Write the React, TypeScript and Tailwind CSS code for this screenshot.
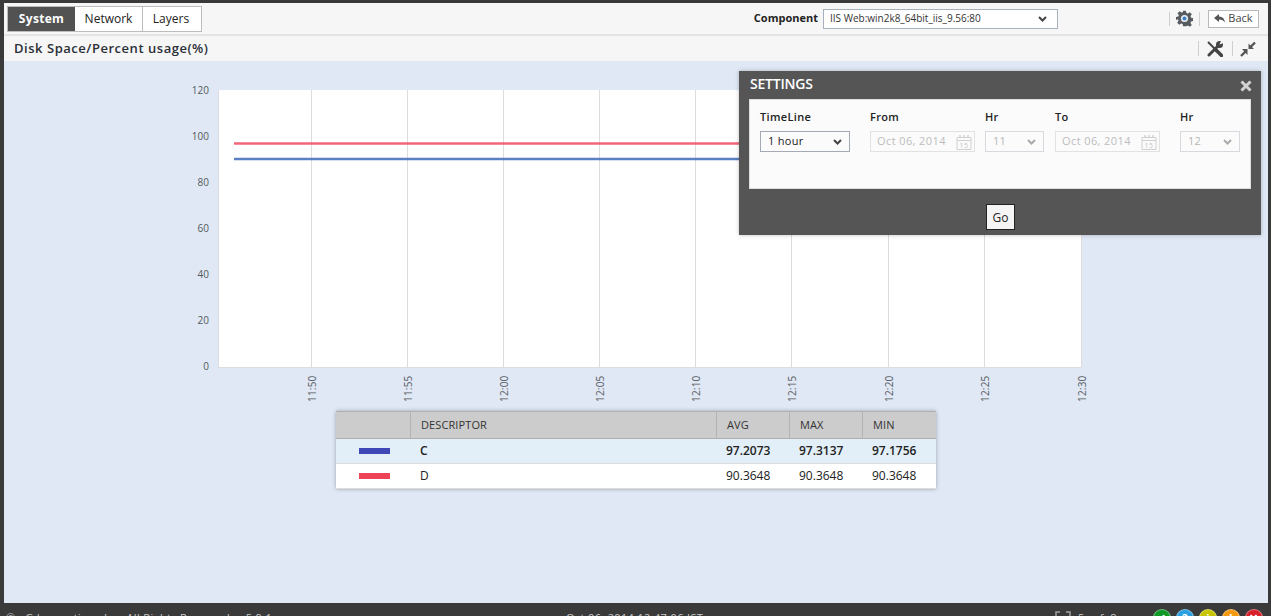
import React from "react";

const Chevron = ({ c = "#444" }: { c?: string }) => (
  <svg width="9" height="6" viewBox="0 0 9 6" className="shrink-0">
    <path d="M1 1 L4.500 4.500 L8 1" fill="none" stroke={c} strokeWidth="2" />
  </svg>
);

const Cal = () => (
  <svg width="16" height="16" viewBox="0 0 16 16" className="shrink-0">
    <path d="M1 3.5h14v12H1z M1 6.5h14" fill="none" stroke="#d0d0d0" strokeWidth="1" />
    <path d="M4 1v3M8 1v3M12 1v3" stroke="#d0d0d0" strokeWidth="1.4" />
    <text x="8" y="14" textAnchor="middle" fontSize="7" fill="#c4c4c4" fontFamily="Open Sans">15</text>
  </svg>
);

const xs = [311, 407, 503, 599, 695, 791, 888, 984, 1081];
const xl = ["11:50", "11:55", "12:00", "12:05", "12:10", "12:15", "12:20", "12:25", "12:30"];
const ys: [string, number][] = [["120", 90], ["100", 136], ["80", 182], ["60", 228], ["40", 274], ["20", 320], ["0", 366]];

const Chart = () => (
  <svg width="1100" height="345" viewBox="4 61 1100 345" className="block" style={{ fontFamily: "'Open Sans', sans-serif" }}>
    <rect x="218" y="90" width="863" height="277" fill="#fff" />
    <path d="M218.5 90V367.5H1081" fill="none" stroke="#dddddd" />
    {xs.map((x) => (
      <line key={x} x1={x + 0.5} x2={x + 0.5} y1="90" y2="367" stroke="#dcdcdc" />
    ))}
    <line x1="234" x2="1081" y1="143.5" y2="143.5" stroke="#ee4a5e" strokeWidth="2.5" strokeOpacity="0.85" />
    <line x1="234" x2="1081" y1="159" y2="159" stroke="#4a72bd" strokeWidth="2.5" strokeOpacity="0.9" />
    {ys.map(([t, y]) => (
      <text key={t} x="209" y={y + 4} textAnchor="end" fontSize="10" fill="#555a60">{t}</text>
    ))}
    {xs.map((x, i) => (
      <text key={x} transform={`translate(${x + 5} 402) rotate(-90)`} fontSize="10" letterSpacing="0.2" fill="#555a60">{xl[i]}</text>
    ))}
  </svg>
);

const Field = ({ label, w, children }: { label: string; w: string; children: React.ReactNode }) => (
  <div className={`flex flex-col ${w}`}>
    <div className="h-[21px] text-[11px] font-semibold text-[#222] leading-[13px] tracking-[0.35px]">{label}</div>
    {children}
  </div>
);

const Sel = ({ v, dis, w }: { v: string; dis?: boolean; w: string }) => (
  <div className={`${w} h-[21px] flex items-center justify-between pl-[7px] pr-[7px] border text-[11px] tracking-[0.3px] ${dis ? "border-[#d8d9de] text-[#b5b5b5]" : "border-[#a3a9b5] text-[#222]"}`}>
    <span>{v}</span>
    <Chevron c={dis ? "#aaa" : "#444"} />
  </div>
);

const DateBox = () => (
  <div className="w-[105px] h-[21px] flex items-center justify-between pl-[6px] pr-[2px] border border-[#e2e2e2] text-[11px] tracking-[0.4px] text-[#bdbdbd]">
    <span>Oct 06, 2014</span>
    <Cal />
  </div>
);

const Settings = () => (
  <div className="absolute left-[735px] top-[10px] w-[522px] h-[164px] bg-[#555555] px-[10px] shadow-[0_0_4px_rgba(0,0,0,0.25)] flex flex-col">
    <div className="h-[28px] flex items-center justify-between">
      <span className="text-[14px] font-semibold text-white leading-none ml-px mt-[-2px] tracking-[-0.2px]">SETTINGS</span>
      <svg width="12" height="12" viewBox="0 0 12 12" className="mr-[-1px] mt-[2px]">
        <path d="M1.5 1.5L10.5 10.5M10.5 1.5L1.5 10.5" stroke="#d4d4d4" strokeWidth="3" />
      </svg>
    </div>
    <div className="h-[90px] bg-[#fbfbfb] border border-[#dddddd] pl-[10px] pt-[10px] flex">
      <Field label="TimeLine" w="w-[110px]"><Sel v="1 hour" w="w-[90px]" /></Field>
      <Field label="From" w="w-[115px]"><DateBox /></Field>
      <Field label="Hr" w="w-[70px]"><Sel v="11" dis w="w-[59px]" /></Field>
      <Field label="To" w="w-[125px]"><DateBox /></Field>
      <Field label="Hr" w="w-[60px]"><Sel v="12" dis w="w-[60px]" /></Field>
    </div>
    <div className="flex justify-center pt-[15px]">
      <div className="w-[29px] h-[26px] pt-px pl-px bg-[#f5f5f5] border border-[#222] text-[12px] text-[#222] flex items-center justify-center">Go</div>
    </div>
  </div>
);

const rows = [
  { c: "#4048b8", d: "C", v: ["97.2073", "97.3137", "97.1756"], bold: true },
  { c: "#ee4256", d: "D", v: ["90.3648", "90.3648", "90.3648"], bold: false },
];

const cols = "grid grid-cols-[74px_306px_73px_73px_74px]";

const Table = () => (
  <div className="w-[600px] mt-[5px] ml-[332px] shadow-[0_0_4px_rgba(0,0,0,0.3)] text-[#222]">
    <div className={`${cols} h-[28px] bg-[#cccccc] border-y border-[#b0b0b0] items-stretch text-[#333] text-[11px] tracking-[0.1px]`}>
      <div />
      {["DESCRIPTOR", "AVG", "MAX", "MIN"].map((h) => (
        <div key={h} className="border-l border-[#b3b3b3] pl-[10px] flex items-center">{h}</div>
      ))}
    </div>
    {rows.map((r) => (
      <div key={r.d} className={`${cols} h-[25px] items-center border-b border-[#dcdcdc] text-[12px] ${r.bold ? "bg-[#e2eef8] font-semibold" : "bg-white"}`}>
        <div className="flex justify-center pl-[2px]">
          <div className="w-[31px] h-[6px]" style={{ background: r.c }} />
        </div>
        <div className="pl-[10px]">{r.d}</div>
        {r.v.map((x, i) => (
          <div key={i} className="pl-[10px]">{x}</div>
        ))}
      </div>
    ))}
  </div>
);

const status: [string, string][] = [
  ["#0f9a28", "✓"],
  ["#2b9fe0", "?"],
  ["#c8c400", "i"],
  ["#f59a10", "!"],
  ["#d8202a", "✕"],
];

export default function App() {
  return (
    <div className="w-[1271px] h-[616px] overflow-hidden bg-[#3a3a3a] pt-[3px] flex flex-col font-['Open_Sans',sans-serif]">
      <div className="ml-[4px] mr-[3px] flex flex-col flex-1 min-h-0">
        <div className="h-[33px] bg-[#f6f6f6] border-b-2 border-[#e4e4e4] flex items-center pl-[3px] pr-[9px] shrink-0">
          <div className="flex h-[26px] border border-[#bcbcbc] text-[12px] text-[#222]">
            <div className="w-[67px] bg-[#525252] text-white font-bold tracking-[0.3px] flex items-center justify-center">System</div>
            <div className="w-[68px] bg-white border-r border-[#bcbcbc] flex items-center justify-center">Network</div>
            <div className="w-[58px] bg-white flex items-center justify-center pr-[2px]">Layers</div>
          </div>
          <div className="flex-1" />
          <span className="text-[11px] font-bold text-[#222] mr-[5px]">Component</span>
          <div className="w-[235px] h-[20px] bg-white border border-[#a9b0bd] flex items-center justify-between pl-[6px] pr-[10px] text-[10px] text-[#333] mr-[111px]">
            <span>IIS Web:win2k8_64bit_iis_9.56:80</span>
            <Chevron />
          </div>
          <div className="w-px h-[14px] bg-[#cfcfcf] mr-[6px]" />
          <svg width="17" height="17" viewBox="0 0 24 24" className="mr-[6px]">
            <path fill="#585c60" d="M10 1h4l.7 3.2 2 .8 2.8-1.8 2.8 2.8-1.8 2.8.8 2 3.2.7v4l-3.2.7-.8 2 1.8 2.8-2.8 2.8-2.8-1.8-2 .8L14 23h-4l-.7-3.2-2-.8-2.8 1.8-2.8-2.8 1.8-2.8-.8-2L0 14v-4l3.2-.7.8-2L2.200 4.500 5 1.700l2.800 1.800 2-.8z" />
            <circle cx="12" cy="12" r="5" fill="#e8eef6" />
            <circle cx="12" cy="12" r="2.800" fill="#3f7fc4" />
          </svg>
          <div className="w-px h-[14px] bg-[#cfcfcf] mr-[8px]" />
          <div className="h-[18px] w-[51px] bg-white border border-[#b9b9b9] flex items-center justify-center gap-[3px] text-[11px] text-[#444]">
            <svg width="11" height="9" viewBox="0 0 11 9"><path fill="#555" d="M0 4l5-4v2.500c3.500 0 5.500 2 6 6-1.500-2-3-3-6-3V8z" /></svg>
            Back
          </div>
        </div>
        <div className="h-[25px] bg-[#f6f6f6] flex items-center pl-[10px] pr-[12px] shrink-0">
          <span className="text-[13px] font-semibold text-[#2b2f36] tracking-[0.53px]">Disk Space/Percent usage(%)</span>
          <div className="flex-1" />
          <div className="w-px h-[15px] bg-[#cfcfcf] mr-[8px]" />
          <svg width="16" height="16" viewBox="0 0 16 16" className="mr-[9px]">
            <path d="M1 1L9 9" stroke="#444" strokeWidth="2" />
            <path d="M9 9L14.500 14.500" stroke="#444" strokeWidth="3.500" strokeLinecap="round" />
            <path d="M2 14L11 5" stroke="#444" strokeWidth="3" strokeLinecap="round" />
            <circle cx="12.500" cy="3.500" r="3.500" fill="#444" />
            <path d="M12.500 3.500L14 0L17 0L17 2z" fill="#f6f6f6" />
          </svg>
          <div className="w-px h-[15px] bg-[#cfcfcf] mr-[7px]" />
          <svg width="16" height="16" viewBox="0 0 16 16">
            <path d="M15 1.500L10.500 6M1 15l4.500-4.500" stroke="#555" strokeWidth="2.400" />
            <path d="M8.500 2.500v5.500h5.500zM7.500 14V8H2z" fill="#555" />
          </svg>
        </div>
        <div className="relative flex-1 min-h-0 bg-[#dfe8f4] flex flex-col">
          <Chart />
          <Table />
          <Settings />
        </div>
      </div>
      <div className="h-[13px] shrink-0 overflow-hidden flex items-start pl-[6px] pt-[8px] text-[11px] leading-[14px] text-[#c8c8c8] relative tracking-[0.35px]">
        <span className="w-[560px] shrink-0 whitespace-nowrap">© eG Innovations Inc. All Rights Reserved. v 5.9.1</span>
        <span className="whitespace-nowrap">Oct 06, 2014 12:47:06 IST</span>
        <svg width="16" height="6" viewBox="0 0 16 6" className="absolute left-[1055px] top-[8px]">
          <path d="M1 6V1h4M11 1h4v5" fill="none" stroke="#a0a0a0" strokeWidth="1.500" />
        </svg>
        <span className="absolute left-[1078px] top-[8px] whitespace-nowrap tracking-[2px]">5 of 8</span>
        <div className="absolute left-[1153px] top-[6px] flex gap-[5px]">
          {status.map(([c, g]) => (
            <div key={c} className="w-[18px] h-[18px] rounded-full text-white font-bold text-[11px] leading-[16px] text-center border border-white/40" style={{ background: c }}>{g}</div>
          ))}
        </div>
      </div>
    </div>
  );
}
